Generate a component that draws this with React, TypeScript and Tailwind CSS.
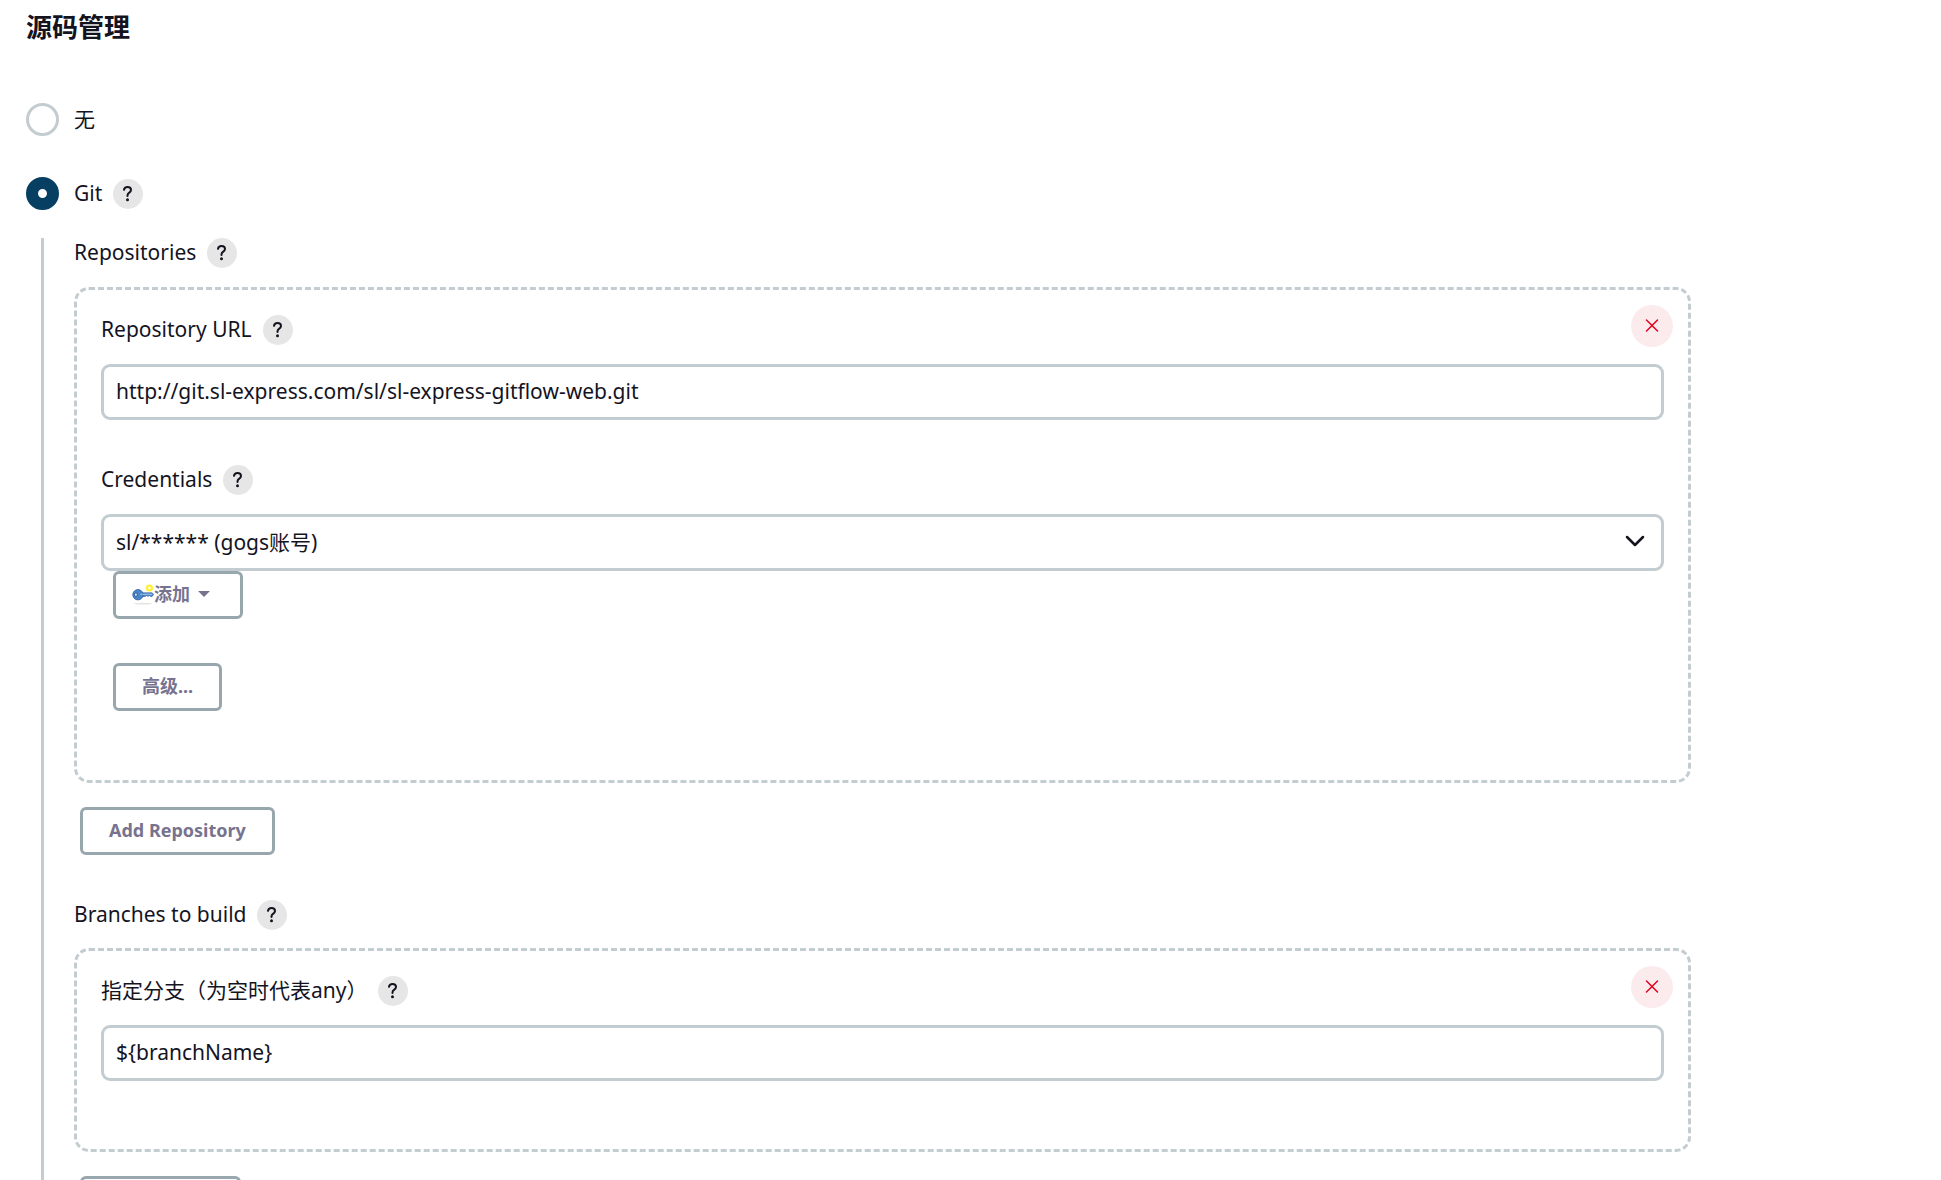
import React, { useState } from "react";

const fieldClass =
  "block w-full rounded-[9px] border-3 border-[#c3ccd1] bg-white px-3 pb-0.5 text-[21px] text-[#14141f] outline-none focus:border-[#0b6aa2]";

function HelpButton({ topic }: { topic: string }) {
  return (
    <button
      type="button"
      aria-label={`Help: ${topic}`}
      className="flex size-[30px] shrink-0 items-center justify-center rounded-full bg-[#e6e6e6] text-[#14141f]"
    >
      <svg viewBox="0 0 30 30" className="size-[30px]" fill="none" aria-hidden="true">
        <path
          d="M11 10.800c.3-1.900 1.600-2.900 3.500-2.900 2.100 0 3.500 1.200 3.500 3 0 1.500-.8 2.200-2 3-1.100.8-1.500 1.400-1.500 2.600v.5"
          stroke="currentColor"
          strokeWidth="2"
          strokeLinecap="round"
          strokeLinejoin="round"
        />
        <circle cx="14.5" cy="20.700" r="1.500" fill="currentColor" />
      </svg>
    </button>
  );
}

function LabelRow({ label, htmlFor }: { label: string; htmlFor?: string }) {
  return (
    <div className="flex h-[30px] items-center gap-[11px]">
      {htmlFor ? (
        <label htmlFor={htmlFor} className="pb-0.5">
          {label}
        </label>
      ) : (
        <span className="pb-0.5">{label}</span>
      )}
      <HelpButton topic={label} />
    </div>
  );
}

function DeleteButton({ label }: { label: string }) {
  return (
    <button
      type="button"
      aria-label={label}
      className="absolute top-[15px] right-[15px] size-[42px] rounded-full bg-[#fcebed] text-[#e6001f]"
    >
      <svg viewBox="0 0 42 42" className="size-[42px]" fill="none" aria-hidden="true">
        <path d="M15.500 15l11 11M26.500 15l-11 11" stroke="currentColor" strokeWidth="1.500" strokeLinecap="round" />
      </svg>
    </button>
  );
}

function OutlineButton({ className = "", children }: { className?: string; children: React.ReactNode }) {
  return (
    <button
      type="button"
      className={`flex h-12 items-center rounded-md border-3 border-[#98a6ad] bg-white pb-0.5 text-[18px] font-bold whitespace-nowrap text-[#77738f] ${className}`}
    >
      {children}
    </button>
  );
}

function KeyIcon() {
  return (
    <svg viewBox="0 0 24 24" className="size-[22px] shrink-0" fill="none" aria-hidden="true">
      <ellipse cx="12" cy="22.500" rx="10" ry="1" fill="#e4e4e4" />
      <path d="M10 10.800h12l1.500 1.700-1.500 2h-2l-1-1-1.500 1-1.500-1-1.500 1H10z" fill="#5b93d3" stroke="#2f64a8" strokeWidth="1" />
      <circle cx="6.500" cy="12.800" r="5.600" fill="#4a86cb" stroke="#2f64a8" strokeWidth="1" />
      <ellipse cx="4.300" cy="12.800" rx="1.300" ry="2.400" fill="#fff" stroke="#234f88" strokeWidth="1" />
      <path d="M9 12.300h13" stroke="#a9caee" strokeWidth="1" />
      <circle cx="19" cy="5.500" r="2.800" fill="#fffbd0" stroke="#fff02a" strokeWidth="2.200" />
    </svg>
  );
}

function Panel({ deleteLabel, className, children }: { deleteLabel: string; className: string; children: React.ReactNode }) {
  return (
    <section className={`relative rounded-[15px] border-3 border-dashed border-[#c3ccd1] px-6 pt-[25px] ${className}`}>
      {children}
      <DeleteButton label={deleteLabel} />
    </section>
  );
}

const radioClass =
  "size-[33px] shrink-0 appearance-none rounded-full border-3 border-[#c3ccd1] bg-white checked:border-12 checked:border-[#073f63]";

export default function App() {
  const [scm, setScm] = useState("git");
  const [url, setUrl] = useState("http://git.sl-express.com/sl/sl-express-gitflow-web.git");
  const [branch, setBranch] = useState("${branchName}");

  return (
    <main className="h-screen overflow-hidden bg-white pl-[26px] font-['Noto_Sans','Noto_Sans_CJK_SC',sans-serif] text-[21px] leading-[30px] text-[#14141f]">
      <h1 className="pt-2 text-[26px] leading-[38px] font-bold">源码管理</h1>

      <div className="mt-[57px] flex h-[33px] items-center gap-[15px]">
        <input id="scm-none" type="radio" name="scm" className={radioClass} checked={scm === "none"} onChange={() => setScm("none")} />
        <label htmlFor="scm-none" className="pb-0.5">
          无
        </label>
      </div>

      <div className="mt-[41px] flex h-[33px] items-center gap-[15px]">
        <input id="scm-git" type="radio" name="scm" className={radioClass} checked={scm === "git"} onChange={() => setScm("git")} />
        <LabelRow label="Git" htmlFor="scm-git" />
      </div>

      <div className="mt-7 mr-[250px] ml-[15px] border-l-3 border-[#c3ccd1] pb-10 pl-[30px]">
        <LabelRow label="Repositories" />

        <Panel deleteLabel="Delete repository" className="mt-[19px] pb-[69px]">
          <LabelRow label="Repository URL" htmlFor="repo-url" />
          <input id="repo-url" type="text" value={url} onChange={(e) => setUrl(e.target.value)} className={`mt-[19px] h-14 ${fieldClass}`} />

          <div className="mt-[45px]">
            <LabelRow label="Credentials" htmlFor="credentials" />
          </div>
          <div className="relative mt-[19px]">
            <select id="credentials" className={`h-[57px] appearance-none ${fieldClass}`}>
              <option>sl/****** (gogs账号)</option>
            </select>
            <svg
              viewBox="0 0 20 12"
              className="pointer-events-none absolute top-[21px] right-[19px] h-3 w-5"
              fill="none"
              aria-hidden="true"
            >
              <path d="M2 2l8 8 8-8" stroke="#14141f" strokeWidth="2.500" strokeLinecap="round" strokeLinejoin="round" />
            </svg>
          </div>
          <div className="flex flex-col items-start gap-11 pl-3">
            <OutlineButton className="w-[130px] pl-4">
              <KeyIcon />
              <span>添加</span>
              <svg viewBox="0 0 12 6" className="ml-2 h-1.5 w-3" aria-hidden="true">
                <path d="M0 0h12L6 6z" fill="#77738f" />
              </svg>
            </OutlineButton>
            <OutlineButton className="px-[26px]">高级...</OutlineButton>
          </div>
        </Panel>

        <div className="mt-6 flex pl-1.5">
          <OutlineButton className="px-[26px]">Add Repository</OutlineButton>
        </div>

        <div className="mt-[45px]">
          <LabelRow label="Branches to build" />
        </div>
        <Panel deleteLabel="Delete branch" className="mt-[18px] pb-[68px]">
          <LabelRow label="指定分支（为空时代表any）" htmlFor="branch" />
          <input id="branch" type="text" value={branch} onChange={(e) => setBranch(e.target.value)} className={`mt-[19px] h-14 ${fieldClass}`} />
        </Panel>

        <div className="mt-6 flex pl-1.5">
          <OutlineButton className="px-[26px]">Add Branch</OutlineButton>
        </div>
      </div>
    </main>
  );
}
